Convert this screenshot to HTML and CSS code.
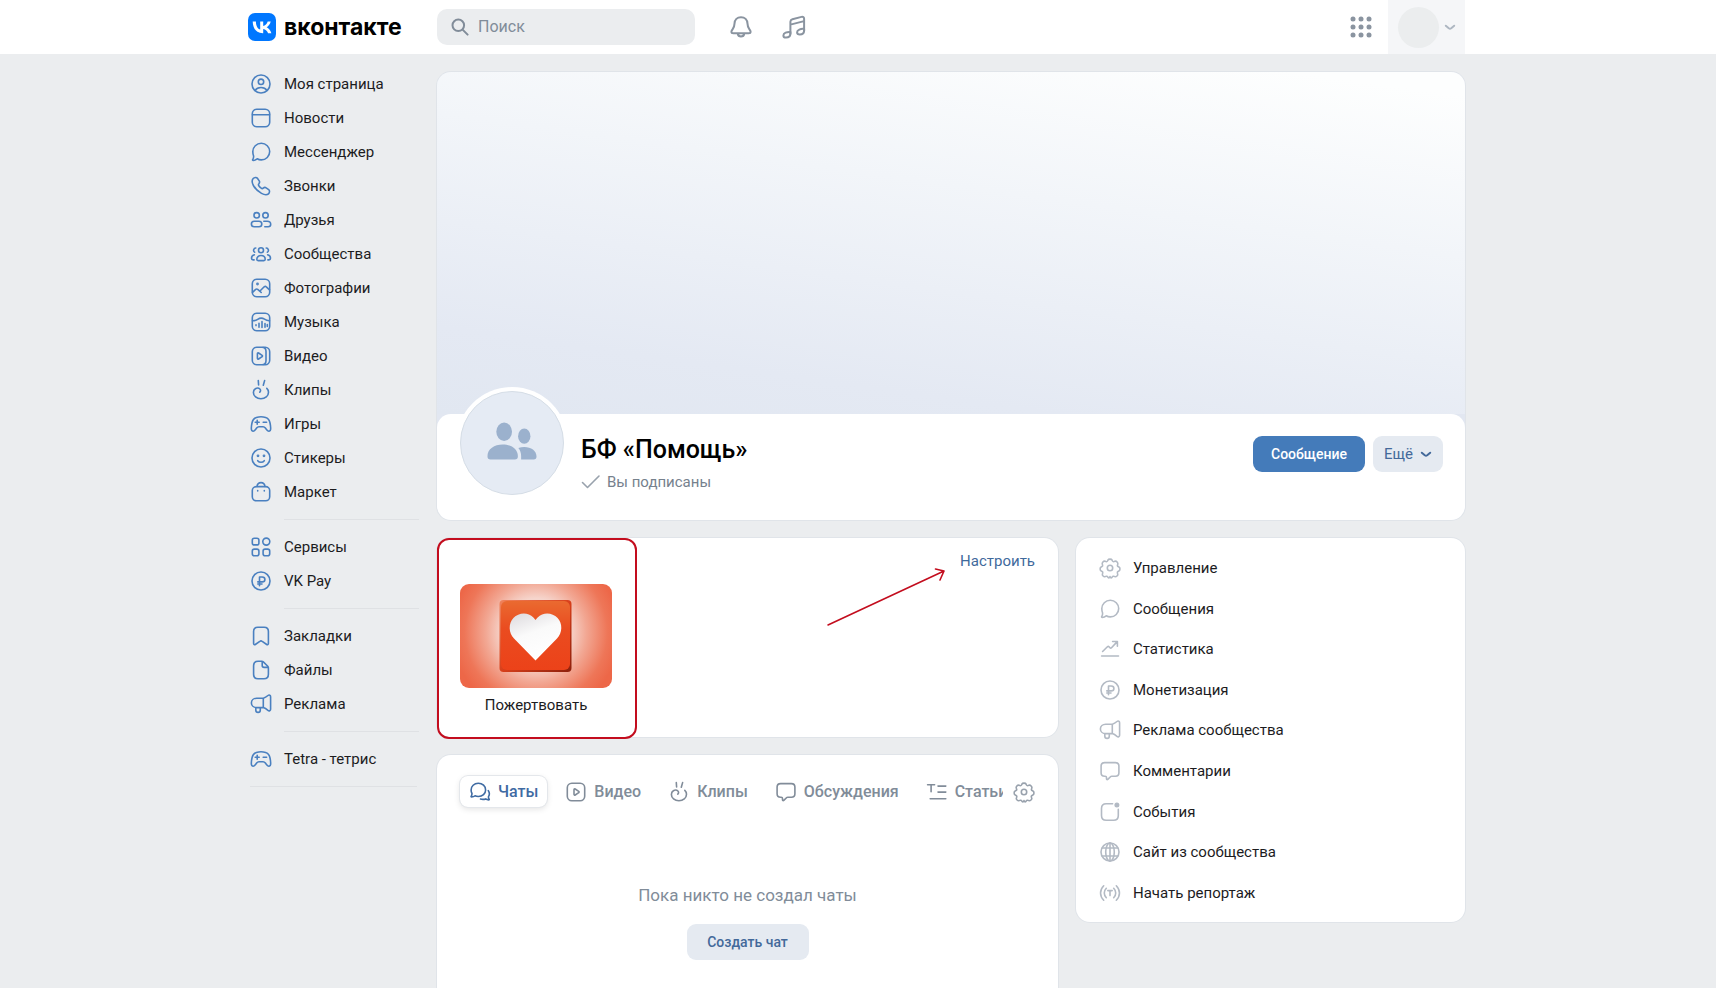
FILE: index.html
```html
<!DOCTYPE html>
<html lang="ru">
<head>
<meta charset="utf-8">
<meta name="viewport" content="width=device-width, initial-scale=1">
<title>БФ «Помощь»</title>
<link rel="stylesheet" href="styles.css">
</head>
<body>
<svg class="sprite" aria-hidden="true">
  <symbol id="i-user" viewBox="0 0 22 22"><circle cx="11" cy="11" r="9"/><circle cx="11" cy="8.800" r="2.700"/><path d="M5.200 17.400c1.200-2 3.200-2.900 5.800-2.900s4.600.9 5.800 2.900"/></symbol>
  <symbol id="i-news" viewBox="0 0 22 22"><rect x="2.300" y="2.300" width="17.400" height="17.400" rx="4.500"/><path d="M2.500 7.800h17"/></symbol>
  <symbol id="i-msg" viewBox="0 0 22 22"><path d="M11.300 2.300c4.700 0 8.400 3.700 8.400 8.300s-3.700 8.300-8.400 8.300c-1.500 0-2.900-.4-4.100-1.100-1.100.9-2.600 1.500-4 1.700-.5 0-.8-.5-.5-.9.800-1.200 1-2.400.9-3.600-.5-1.300-.8-2.800-.8-4.400 0-4.600 3.800-8.300 8.500-8.300z"/></symbol>
  <symbol id="i-phone" viewBox="0 0 22 22"><path d="M3.200 3.500c1-1.100 3.300-1.500 4.200-.2l1.800 2.600c.6.9.4 2-.3 2.900-.6.700-.6 1.300-.1 2 .7 1 1.500 1.800 2.400 2.400.7.500 1.400.5 2-.1.900-.7 2-.9 2.900-.3l2.600 1.800c1.300.9.900 3.200-.2 4.200-1.600 1.400-4.400 1-7-.4-3.600-2-6.500-4.900-8.100-7.900-1.400-2.600-1.600-5.400-.2-7z"/></symbol>
  <symbol id="i-friends" viewBox="0 0 22 22"><circle cx="6.700" cy="6.300" r="2.700"/><circle cx="15.500" cy="6.300" r="2.700"/><rect x="1.400" y="12.200" width="10.400" height="5.600" rx="2.800"/><path d="M13.800 12.300h3.400c2.100 0 3.500 1.400 3.500 3s-1 2.500-2.500 2.500h-3.400"/></symbol>
  <symbol id="i-groups" viewBox="0 0 22 22"><circle cx="11" cy="7.200" r="2.500"/><path d="M6.800 16.300c0-2.300 1.700-3.800 4.200-3.800s4.200 1.500 4.200 3.800c0 .8-.5 1.300-1.300 1.300H8.100c-.8 0-1.300-.5-1.300-1.300zM5.800 5a2.300 2.300 0 0 0-1.200 4.200M16.200 5a2.300 2.300 0 0 1 1.200 4.200M4.300 11.800c-1.700.5-2.800 1.800-2.800 3.500 0 1 .6 1.600 1.600 1.600h1M17.700 11.800c1.700.5 2.800 1.800 2.800 3.500 0 1-.6 1.600-1.600 1.600h-1"/></symbol>
  <symbol id="i-photo" viewBox="0 0 22 22"><rect x="2.300" y="2.300" width="17.400" height="17.400" rx="4.500"/><circle cx="7.500" cy="7" r=".6"/><path d="M2.500 15.300l3.200-2.900c.6-.5 1.400-.5 2 0l2 1.800 4.500-4.400c.7-.6 1.500-.6 2.100 0l3.200 3M9.700 14.200l1.500 1.300"/></symbol>
  <symbol id="i-music" viewBox="0 0 22 22"><rect x="2.300" y="2.300" width="17.400" height="17.400" rx="4.500"/><path d="M2.500 9.800c2.400.1 3.900-.6 5.200-1.500 2.300-1.600 4.600-1.600 6.800-.1 1.300.9 2.600 1.600 5 1.500M6 13.800v.8M9 12.200v4M12 10.500v6M15 12.500v3.800M17.300 13.500v2"/></symbol>
  <symbol id="i-video" viewBox="0 0 22 22"><rect x="2.300" y="2.300" width="17.400" height="17.400" rx="4.500"/><path d="M13 2.500c2.200.2 3 1.700 3 4v9c0 2.300-.8 3.800-3 4M7.400 8.700v4.600c0 .7.600 1 1.200.7l3.500-2.300c.5-.3.500-1 0-1.400L8.600 8c-.6-.3-1.200 0-1.200.7z"/></symbol>
  <symbol id="i-play" viewBox="0 0 22 22"><rect x="2.300" y="2.300" width="17.400" height="17.400" rx="4.500"/><path d="M9 8.700v4.600c0 .7.600 1 1.200.7l3.500-2.300c.5-.3.500-1 0-1.400L10.200 8c-.6-.3-1.200 0-1.200.7z"/></symbol>
  <symbol id="i-clips" viewBox="0 0 22 22"><path d="M8.300 1.600l.3 4.400M14.600 1.600l-1.300 4.600M9.800 13.200c1-.9 1-2.300.1-3.200-1.100-1.100-3-1.200-4.500-.3-1.300.8-2 2.200-2 3.700 0 3.600 3.300 6.400 7.500 6.400s7.600-2.800 7.600-6.600c0-1.600-.6-2.900-1.700-3.900"/></symbol>
  <symbol id="i-game" viewBox="0 0 22 22"><path d="M6.400 4.400c3-.9 6.200-.9 9.200 0 2.400.7 3.700 2.500 4.300 5.100.6 2.500.9 5 .7 6.900-.2 1.800-1.700 2.300-3 1.200-.9-.8-1.500-1.700-2.200-2.500-.7-.9-1.300-1.300-2.400-1.300H9c-1.100 0-1.700.4-2.400 1.300-.7.800-1.300 1.700-2.200 2.500-1.300 1.100-2.800.6-3-1.200-.2-1.900.1-4.400.7-6.900.6-2.600 1.900-4.400 4.300-5.100zM7.200 7.300v4M5.200 9.300h4M13.200 9.300h3.400"/></symbol>
  <symbol id="i-smile" viewBox="0 0 22 22"><circle cx="11" cy="11" r="9"/><circle cx="8" cy="8.800" r=".6"/><circle cx="14" cy="8.800" r=".6"/><path d="M7.700 13.700c1.700 2.100 4.900 2.100 6.600 0"/></symbol>
  <symbol id="i-market" viewBox="0 0 22 22"><rect x="2.300" y="5.600" width="17.400" height="14.200" rx="4"/><path d="M7 5.500c.3-2.300 1.900-3.900 4-3.900s3.700 1.600 4 3.900M7.700 9.600v.3M14.300 9.600v.3"/></symbol>
  <symbol id="i-services" viewBox="0 0 22 22"><rect x="2.300" y="2.300" width="6.600" height="6.600" rx="2"/><circle cx="16.300" cy="5.600" r="3.500"/><rect x="2.300" y="13.100" width="6.600" height="6.600" rx="2"/><rect x="13.100" y="13.100" width="6.600" height="6.600" rx="2"/></symbol>
  <symbol id="i-pay" viewBox="0 0 22 22"><circle cx="11" cy="11" r="9"/><path d="M9.500 15.800V7h2.700c1.700 0 2.700 1 2.700 2.400s-1 2.500-2.700 2.500H7.800M7.800 14h4.200"/></symbol>
  <symbol id="i-bookmark" viewBox="0 0 22 22"><path d="M3.600 6.600c0-2.800 1.400-4.300 4.200-4.300h6.400c2.800 0 4.200 1.500 4.200 4.300v12c0 1-.9 1.500-1.700.9l-4.500-3.200c-.8-.6-1.600-.6-2.400 0l-4.500 3.200c-.8.6-1.700.1-1.700-.9z"/></symbol>
  <symbol id="i-file" viewBox="0 0 22 22"><path d="M11.800 2.300H8c-3 0-4.400 1.500-4.400 4.500v8.500c0 3 1.400 4.500 4.400 4.500h6c3 0 4.400-1.500 4.400-4.500V8.700c0-.6-.2-1-.6-1.400l-4.500-4.400c-.4-.4-.9-.6-1.500-.6zM12.200 2.500v4c0 1.200.7 1.900 1.900 1.900h4"/></symbol>
  <symbol id="i-ads" viewBox="0 0 22 22"><path d="M13.300 5.200H6.700c-3 0-5.300 2-5.300 4.700s2.300 4.700 5.300 4.700h6.600M13.300 5.200c1.800-.5 3.300-1.500 4.700-2.700 1.100-.9 2.600-.3 2.600 1.200v12.500c0 1.500-1.500 2.100-2.600 1.200-1.400-1.200-2.900-2.300-4.700-2.800zM5.800 14.700v2.300c0 1.400 1 2.400 2.300 2.400s2.200-1 2.200-2.400v-2.300"/></symbol>
  <symbol id="i-gear" viewBox="0 0 22 22"><circle cx="11" cy="11" r="2.700"/><path d="M8.900 3.100c.6-1.300 3.600-1.300 4.200 0l.4.900c.3.600.9.800 1.500.6l1-.4c1.400-.5 3.300 1.500 2.800 2.900l-.3 1c-.2.600 0 1.200.6 1.400l.9.500c1.300.6 1.300 3.400-.1 4l-.9.400c-.6.300-.8.900-.6 1.500l.3 1c.5 1.400-1.500 3.300-2.900 2.700l-1-.3c-.6-.2-1.200 0-1.500.6M8.900 3.100l-.4.900c-.3.600-.9.800-1.500.6l-1-.4c-1.400-.5-3.300 1.500-2.700 2.900l.3 1c.2.600 0 1.200-.6 1.400l-.9.500c-1.300.6-1.300 3.400.1 4l.9.400c.6.300.8.900.6 1.500l-.3 1c-.5 1.400 1.400 3.300 2.800 2.700l1-.3c.6-.2 1.200 0 1.500.6.700 1.400 1.600 1.200 2.300-.2M13.300 19.900c-.7 1.400-1.600 1.200-2.300-.2"/></symbol>
  <symbol id="i-stats" viewBox="0 0 22 22"><path d="M3.600 13.500l4.800-4.700c.6-.5 1.100-.5 1.600 0l.9 1c.5.500 1.100.5 1.600 0L18 3.900M13.600 3.500h4.800v4.800M2.600 18h16.900"/></symbol>
  <symbol id="i-comment" viewBox="0 0 22 22"><path d="M5.600 2.600h10.800c2.300 0 3.500 1.200 3.500 3.500v6.600c0 2.300-1.200 3.500-3.500 3.500h-3.600c-.5 0-.9.200-1.300.5l-2.700 2.700c-.6.500-1.300.2-1.300-.6v-1.300c0-.8-.4-1.300-1.300-1.300h-.6c-2.300 0-3.500-1.200-3.500-3.500V6.100c0-2.300 1.200-3.500 3.500-3.500z"/></symbol>
  <symbol id="i-event" viewBox="0 0 22 22"><path d="M13.600 2.700H7.200c-3.200 0-4.700 1.500-4.700 4.700v7.200c0 3.200 1.500 4.700 4.700 4.700h7.400c3.200 0 4.700-1.500 4.700-4.700V8.400"/><circle cx="17.900" cy="4.100" r="1.700" fill="currentColor"/></symbol>
  <symbol id="i-globe" viewBox="0 0 22 22"><circle cx="11" cy="11" r="9"/><ellipse cx="11" cy="11" rx="4.300" ry="9"/><path d="M11 2v18M3.400 7h15.200M3.400 15h15.200"/></symbol>
  <symbol id="i-live" viewBox="0 0 22 22"><path d="M4.700 3.800C.5 8 .5 14 4.700 18.200M7.300 6.300c-2.700 2.700-2.700 6.700 0 9.400M17.300 3.800c4.200 4.200 4.200 10.200 0 14.400M14.700 6.300c2.700 2.700 2.700 6.700 0 9.400M8.800 8.600h4.400M11 8.600v5"/></symbol>
  <symbol id="i-chats" viewBox="0 0 22 22"><path d="M9.300 2.300c4.200 0 7.300 2.900 7.300 6.600s-3.100 6.600-7.300 6.600c-1.200 0-2.300-.2-3.300-.7-1 .7-2.200 1-3.500 1.100-.4 0-.6-.4-.3-.7.600-.8.800-1.700.8-2.700-.6-1-.9-2.200-.9-3.600 0-3.700 3-6.600 7.200-6.600zM19.300 9.600c1.300 2 1.300 4.300.2 6.100-.1.900.1 1.700.6 2.400.3.400.1.800-.4.800-1.100-.1-2.200-.4-3-1-1.600.6-3.400.7-5.200.1"/></symbol>
  <symbol id="i-article" viewBox="0 0 22 22"><path d="M1.600 3.700h7M5.100 3.700v7.100M12 5.100h7.800M12 11.100h7.800M4.200 17.700h15.600"/></symbol>
  <symbol id="i-bell" viewBox="0 0 24 24"><path d="M12 2.200c-3.900 0-6.300 2.700-6.500 6.400-.1 2.600-.6 4-1.800 5.600-1 1.400-1.300 1.900-1.300 2.500 0 1 .8 1.500 2 1.500h15.200c1.200 0 2-.5 2-1.500 0-.6-.3-1.100-1.300-2.500-1.200-1.600-1.700-3-1.800-5.600-.2-3.700-2.600-6.400-6.500-6.400zM8.700 18.500c.3 1.900 1.500 3 3.300 3s3-1.100 3.300-3"/></symbol>
  <symbol id="i-note" viewBox="0 0 24 24"><path d="M8.400 19.100V6.800c0-1.500.6-2.200 2-2.600l9.100-2.300c1.500-.4 2.600.3 2.600 1.900v12.100M8.400 9.600l13.700-3.500"/><path d="M8.400 17c-3.400-.4-7 1-7 3.400 0 1.400 1.100 2.200 2.700 2.200 2.500 0 4.300-1.500 4.300-4zM22.100 13.900c-3.400-.4-7 1-7 3.400 0 1.400 1.100 2.200 2.700 2.200 2.500 0 4.300-1.500 4.300-4z"/></symbol>
  <symbol id="i-search" viewBox="0 0 18 18"><circle cx="7.300" cy="7.300" r="5.800"/><path d="M11.600 11.600l5 5"/></symbol>
  <symbol id="i-chevron" viewBox="0 0 12 12"><path d="M1.800 4.700L4.800 7.200c.8.600 1.600.6 2.400 0l3-2.500"/></symbol>
</svg>

<header class="header">
  <div class="header-inner">
    <a class="logo" href="#">
      <svg class="logo-mark" viewBox="0 0 28 28" aria-hidden="true"><rect width="28" height="28" rx="7" fill="#07f"/><path d="M14.900 20.200C8.500 20.200 4.900 15.800 4.700 8.500h3.200c.1 5.400 2.500 7.600 4.300 8.100V8.500h3v4.600c1.900-.2 3.800-2.300 4.500-4.600h3c-.5 2.800-2.600 4.900-4.100 5.800 1.500.7 3.900 2.500 4.800 5.900h-3.300c-.7-2.200-2.500-3.900-4.900-4.200v4.200z" fill="#fff"/></svg>
      <span>вконтакте</span>
    </a>
    <label class="search">
      <svg class="search-icon" aria-hidden="true"><use href="#i-search"/></svg>
      <input type="search" placeholder="Поиск" aria-label="Поиск">
    </label>
    <button class="head-btn" type="button" aria-label="Уведомления"><svg><use href="#i-bell"/></svg></button>
    <button class="head-btn" type="button" aria-label="Музыка"><svg><use href="#i-note"/></svg></button>
    <button class="head-btn apps" type="button" aria-label="Сервисы"><svg viewBox="0 0 24 24"><g fill="currentColor" stroke="none"><circle cx="4" cy="4" r="2.500"/><circle cx="12" cy="4" r="2.500"/><circle cx="20" cy="4" r="2.500"/><circle cx="4" cy="12" r="2.500"/><circle cx="12" cy="12" r="2.500"/><circle cx="20" cy="12" r="2.500"/><circle cx="4" cy="20" r="2.500"/><circle cx="12" cy="20" r="2.500"/><circle cx="20" cy="20" r="2.500"/></g></svg></button>
    <button class="profile" type="button" aria-label="Профиль"><span class="profile-pic"></span><svg class="chevron"><use href="#i-chevron"/></svg></button>
  </div>
</header>

<div class="page">
  <nav class="side">
    <ul>
      <li><a href="#"><svg><use href="#i-user"/></svg>Моя страница</a></li>
      <li><a href="#"><svg><use href="#i-news"/></svg>Новости</a></li>
      <li><a href="#"><svg><use href="#i-msg"/></svg>Мессенджер</a></li>
      <li><a href="#"><svg><use href="#i-phone"/></svg>Звонки</a></li>
      <li><a href="#"><svg><use href="#i-friends"/></svg>Друзья</a></li>
      <li><a href="#"><svg><use href="#i-groups"/></svg>Сообщества</a></li>
      <li><a href="#"><svg><use href="#i-photo"/></svg>Фотографии</a></li>
      <li><a href="#"><svg><use href="#i-music"/></svg>Музыка</a></li>
      <li><a href="#"><svg><use href="#i-video"/></svg>Видео</a></li>
      <li><a href="#"><svg><use href="#i-clips"/></svg>Клипы</a></li>
      <li><a href="#"><svg><use href="#i-game"/></svg>Игры</a></li>
      <li><a href="#"><svg><use href="#i-smile"/></svg>Стикеры</a></li>
      <li><a href="#"><svg><use href="#i-market"/></svg>Маркет</a></li>
    </ul>
    <ul>
      <li><a href="#"><svg><use href="#i-services"/></svg>Сервисы</a></li>
      <li><a href="#"><svg><use href="#i-pay"/></svg>VK Pay</a></li>
    </ul>
    <ul>
      <li><a href="#"><svg><use href="#i-bookmark"/></svg>Закладки</a></li>
      <li><a href="#"><svg><use href="#i-file"/></svg>Файлы</a></li>
      <li><a href="#"><svg><use href="#i-ads"/></svg>Реклама</a></li>
    </ul>
    <ul>
      <li><a href="#"><svg><use href="#i-game"/></svg>Tetra - тетрис</a></li>
    </ul>
  </nav>

  <main class="content">
    <section class="card community">
      <div class="cover"></div>
      <div class="info">
        <div class="avatar">
          <svg viewBox="0 0 104 104" aria-hidden="true"><g fill="#9bb1cd"><ellipse cx="44" cy="40.500" rx="8" ry="9.500"/><ellipse cx="64.500" cy="45" rx="6.300" ry="7.800"/><path d="M27 65.500C27 58 34 53.500 42.500 53.500S58 58 58 65.500c0 2.200-1 3.200-3.200 3.200H30.200c-2.200 0-3.200-1-3.200-3.200zM58.500 57c2-.7 4-.9 6-.9 7 0 12.500 3.700 12.500 9.700 0 2-.9 2.900-2.900 2.900H61.300v-3.400c0-3.300-.9-6.100-2.800-8.300z"/></g></svg>
        </div>
        <div class="title">
          <h1>БФ «Помощь»</h1>
          <p><svg viewBox="0 0 20 16" aria-hidden="true"><path d="M1.500 8.500l5 5L18 2"/></svg>Вы подписаны</p>
        </div>
        <div class="actions">
          <button class="btn primary" type="button">Сообщение</button>
          <button class="btn more" type="button">Ещё<svg class="chevron"><use href="#i-chevron"/></svg></button>
        </div>
      </div>
    </section>

    <div class="columns">
      <div class="wide">
        <section class="card apps-card">
          <a class="donate" href="#">
            <svg viewBox="0 0 152 104" aria-hidden="true">
              <defs>
                <radialGradient id="glow" gradientUnits="userSpaceOnUse" cx="76" cy="48" r="84"><stop offset=".4" stop-color="#f6d5cc"/><stop offset=".6" stop-color="#f2a793"/><stop offset=".85" stop-color="#ee7658"/><stop offset="1" stop-color="#ed6748"/></radialGradient>
                <linearGradient id="tile" x1="0" y1="0" x2="0" y2="1"><stop offset="0" stop-color="#ea6a30"/><stop offset=".4" stop-color="#ea4c20"/><stop offset="1" stop-color="#ec4219"/></linearGradient>
                <linearGradient id="edge" x1="0" y1="0" x2="1" y2="1"><stop offset="0" stop-color="#f0835c"/><stop offset=".5" stop-color="#d8401b"/><stop offset="1" stop-color="#8d200c"/></linearGradient>
                <linearGradient id="heart" x1="0" y1="0" x2=".4" y2="1"><stop offset="0" stop-color="#dcd9dd"/><stop offset=".5" stop-color="#fafafa"/><stop offset="1" stop-color="#fff"/></linearGradient>
              </defs>
              <rect width="152" height="104" fill="url(#glow)"/>
              <rect x="39.500" y="16" width="72" height="72" rx="4" fill="url(#edge)"/>
              <rect x="41" y="17" width="69" height="69" rx="6" fill="url(#tile)"/>
              <path d="M75.500 76.500L54 54.500c-5.500-5.700-5.800-14.800-.6-20.500 5.400-5.900 14.500-6.200 20-.6l2.100 2.500 2.100-2.500c5.500-5.600 14.600-5.300 20 .6 5.200 5.700 4.900 14.800-.6 20.500z" fill="url(#heart)"/>
            </svg>
            <span>Пожертвовать</span>
          </a>
          <a class="setup" href="#">Настроить</a>
          <svg class="arrow" viewBox="0 0 120 60" aria-hidden="true"><path d="M2 57L118 3M109.500 1L118 3l-4 9"/></svg>
        </section>

        <section class="card tabs-card">
          <div class="tabs-row">
            <div class="tabs" role="tablist">
              <button class="tab active" type="button" role="tab" aria-selected="true"><svg><use href="#i-chats"/></svg>Чаты</button>
              <button class="tab" type="button" role="tab"><svg><use href="#i-play"/></svg>Видео</button>
              <button class="tab" type="button" role="tab"><svg><use href="#i-clips"/></svg>Клипы</button>
              <button class="tab" type="button" role="tab"><svg><use href="#i-comment"/></svg>Обсуждения</button>
              <button class="tab" type="button" role="tab"><svg><use href="#i-article"/></svg>Статьи</button>
            </div>
            <button class="tabs-gear" type="button" aria-label="Настройки"><svg><use href="#i-gear"/></svg></button>
          </div>
          <div class="empty">
            <p>Пока никто не создал чаты</p>
            <button class="btn create" type="button">Создать чат</button>
          </div>
        </section>
      </div>

      <aside class="card manage">
        <a href="#"><svg><use href="#i-gear"/></svg>Управление</a>
        <a href="#"><svg><use href="#i-msg"/></svg>Сообщения</a>
        <a href="#"><svg><use href="#i-stats"/></svg>Статистика</a>
        <a href="#"><svg><use href="#i-pay"/></svg>Монетизация</a>
        <a href="#"><svg><use href="#i-ads"/></svg>Реклама сообщества</a>
        <a href="#"><svg><use href="#i-comment"/></svg>Комментарии</a>
        <a href="#"><svg><use href="#i-event"/></svg>События</a>
        <a href="#"><svg><use href="#i-globe"/></svg>Сайт из сообщества</a>
        <a href="#"><svg><use href="#i-live"/></svg>Начать репортаж</a>
      </aside>
    </div>
  </main>
</div>
</body>
</html>
```
FILE: styles.css
```css
* { box-sizing: border-box; }

body {
  margin: 0;
  min-height: 100vh;
  display: flex;
  flex-direction: column;
  background: #ebedef;
  color: #1c1c1e;
  font: 15px/20px Roboto, "Noto Sans", sans-serif;
}

a { color: inherit; text-decoration: none; }
h1, p, ul { margin: 0; padding: 0; }
ul { list-style: none; }

button {
  border: 0;
  padding: 0;
  background: none;
  color: inherit;
  font: inherit;
  cursor: pointer;
}

svg {
  flex: none;
  width: 22px;
  height: 22px;
  fill: none;
  stroke: currentColor;
  stroke-width: 1.6;
  stroke-linecap: round;
  stroke-linejoin: round;
}

.sprite { position: absolute; width: 0; height: 0; }
.chevron { width: 12px; height: 12px; }

/* Header */
.header { background: #fff; padding-right: 3px; }

.header-inner {
  display: flex;
  align-items: center;
  height: 54px;
  max-width: 1217px;
  margin: 0 auto;
}

.logo {
  display: flex;
  align-items: center;
  gap: 8px;
  width: 189px;
  color: #000;
  font: 700 23px/28px Inter, Roboto, sans-serif;
}
.logo span { padding-bottom: 1px; }
.logo-mark { width: 28px; height: 28px; stroke: none; }

.search {
  display: flex;
  align-items: center;
  gap: 9px;
  width: 258px;
  height: 36px;
  margin-right: 32px;
  padding: 0 14px;
  border-radius: 10px;
  background: #ebedef;
  color: #818c99;
}
.search-icon { width: 18px; height: 18px; stroke-width: 2; }
.search input {
  flex: 1;
  min-width: 0;
  border: 0;
  padding: 0;
  background: none;
  color: #000;
  font: 16px/20px Roboto, sans-serif;
}
.search input::placeholder { color: #818c99; opacity: 1; }

.head-btn {
  display: grid;
  place-items: center;
  width: 28px;
  height: 36px;
  margin-right: 25px;
  color: #8a94a0;
}
.head-btn svg { width: 24px; height: 24px; stroke-width: 2; }
.head-btn.apps { margin: 0 13px 0 auto; }

.profile {
  display: flex;
  align-items: center;
  justify-content: space-between;
  width: 77px;
  height: 54px;
  padding: 0 9px 0 10px;
  background: #f5f6f8;
  color: #aeb7c2;
}
.profile .chevron { stroke-width: 2; }
.profile-pic { width: 41px; height: 41px; border-radius: 50%; background: #ebedee; }

/* Page frame */
.page {
  flex: 1;
  display: flex;
  width: 100%;
  max-width: 1220px;
  margin: 0 auto;
  padding-right: 3px;
}

.side { flex: none; width: 189px; padding: 13px 18px 0 2px; }
.side ul::after {
  content: "";
  display: block;
  height: 1px;
  margin: 10px 0 10px 34px;
  background: #dfe1e4;
}
.side ul:last-child::after { margin-left: 0; margin-right: 2px; }
.side a { display: flex; align-items: center; gap: 12px; height: 34px; }
.side svg { color: #4a80c0; }

.content {
  flex: 1;
  min-width: 0;
  display: flex;
  flex-direction: column;
  gap: 18px;
  padding-top: 18px;
}

.card {
  border-radius: 14px;
  background: #fff;
  box-shadow: 0 0 0 1px #e0e4e9;
}

/* Community header */
.community { background: #e2e7f1; }
.cover {
  height: 342px;
  border-radius: 14px 14px 0 0;
  background: linear-gradient(188deg, #fdfefe 5%, #f2f5f9 38%, #e4e9f3 82%, #e1e7f1);
}
.info {
  display: flex;
  align-items: flex-start;
  height: 106px;
  padding: 22px 22px 0 23px;
  border-radius: 14px;
  background: #fff;
}
.avatar {
  width: 104px;
  height: 104px;
  margin-top: -45px;
  border: 1px solid #d5dde6;
  border-radius: 50%;
  background: #e5ebf4;
  box-shadow: 0 0 0 4px #fff;
}
.avatar svg { width: 102px; height: 102px; stroke: none; }
.title { flex: 1; padding-left: 17px; }
.title h1 { color: #000; font: 500 25px/28px Roboto, sans-serif; }
.title p {
  display: flex;
  align-items: center;
  gap: 6px;
  margin-top: 8px;
  color: #76818d;
}
.title p svg { width: 20px; height: 16px; color: #99a2ad; }

.actions { display: flex; gap: 8px; }
.btn {
  height: 36px;
  border-radius: 9px;
  background: #e5eaf1;
  color: #43699a;
  font-size: 14px;
  font-weight: 500;
}
.btn.primary { width: 112px; background: #447bba; color: #fff; }
.btn.more {
  display: flex;
  align-items: center;
  justify-content: center;
  gap: 7px;
  width: 70px;
  font-size: 15px;
  font-weight: 400;
}
.btn.more svg { stroke-width: 2; }

/* Lower columns */
.columns { flex: 1; display: flex; align-items: flex-start; gap: 18px; }
.wide {
  flex: 1;
  align-self: stretch;
  min-width: 0;
  display: flex;
  flex-direction: column;
  gap: 18px;
}

.apps-card {
  position: relative;
  display: flex;
  justify-content: space-between;
  align-items: flex-start;
}
.donate {
  display: flex;
  flex-direction: column;
  align-items: center;
  gap: 7px;
  width: 200px;
  height: 201px;
  margin-bottom: -2px;
  padding: 44px 2px 0 0;
  border: 2px solid #c30d1e;
  border-radius: 12px;
}
.donate svg { width: 152px; height: 104px; border-radius: 9px; stroke: none; }
.setup { margin: 13px 23px; color: #3f6a9c; }
.arrow {
  position: absolute;
  right: 112px;
  top: 30px;
  width: 120px;
  height: 60px;
  color: #c30d1e;
}

.tabs-card { flex: 1; padding: 21px 23px; border-radius: 14px 14px 0 0; }
.tabs-row { display: flex; align-items: center; }
.tabs {
  flex: 1;
  min-width: 0;
  display: flex;
  gap: 9px;
  margin: -12px 10px -12px -12px;
  padding: 12px 0 12px 12px;
  overflow: hidden;
}
.tab {
  display: flex;
  align-items: center;
  gap: 7px;
  height: 31px;
  padding: 0 9px;
  border-radius: 8px;
  color: #818c99;
  font-size: 16px;
  font-weight: 500;
}
.tab.active { color: #3f6ba3; box-shadow: 0 0 0 1px #e4e7eb, 0 2px 6px #0000001f; }
.tabs-gear { height: 22px; color: #99a2ad; }

.empty {
  display: flex;
  flex-direction: column;
  align-items: center;
  gap: 19px;
  padding-top: 78px;
  color: #818c99;
  font-size: 17px;
}
.create { width: 122px; }

.manage {
  width: 389px;
  min-height: 384px;
  padding: 10px 23px 9px;
  display: grid;
  grid-auto-rows: 1fr;
}
.manage a { display: flex; align-items: center; gap: 12px; }
.manage svg { color: #b3bac4; }
```
